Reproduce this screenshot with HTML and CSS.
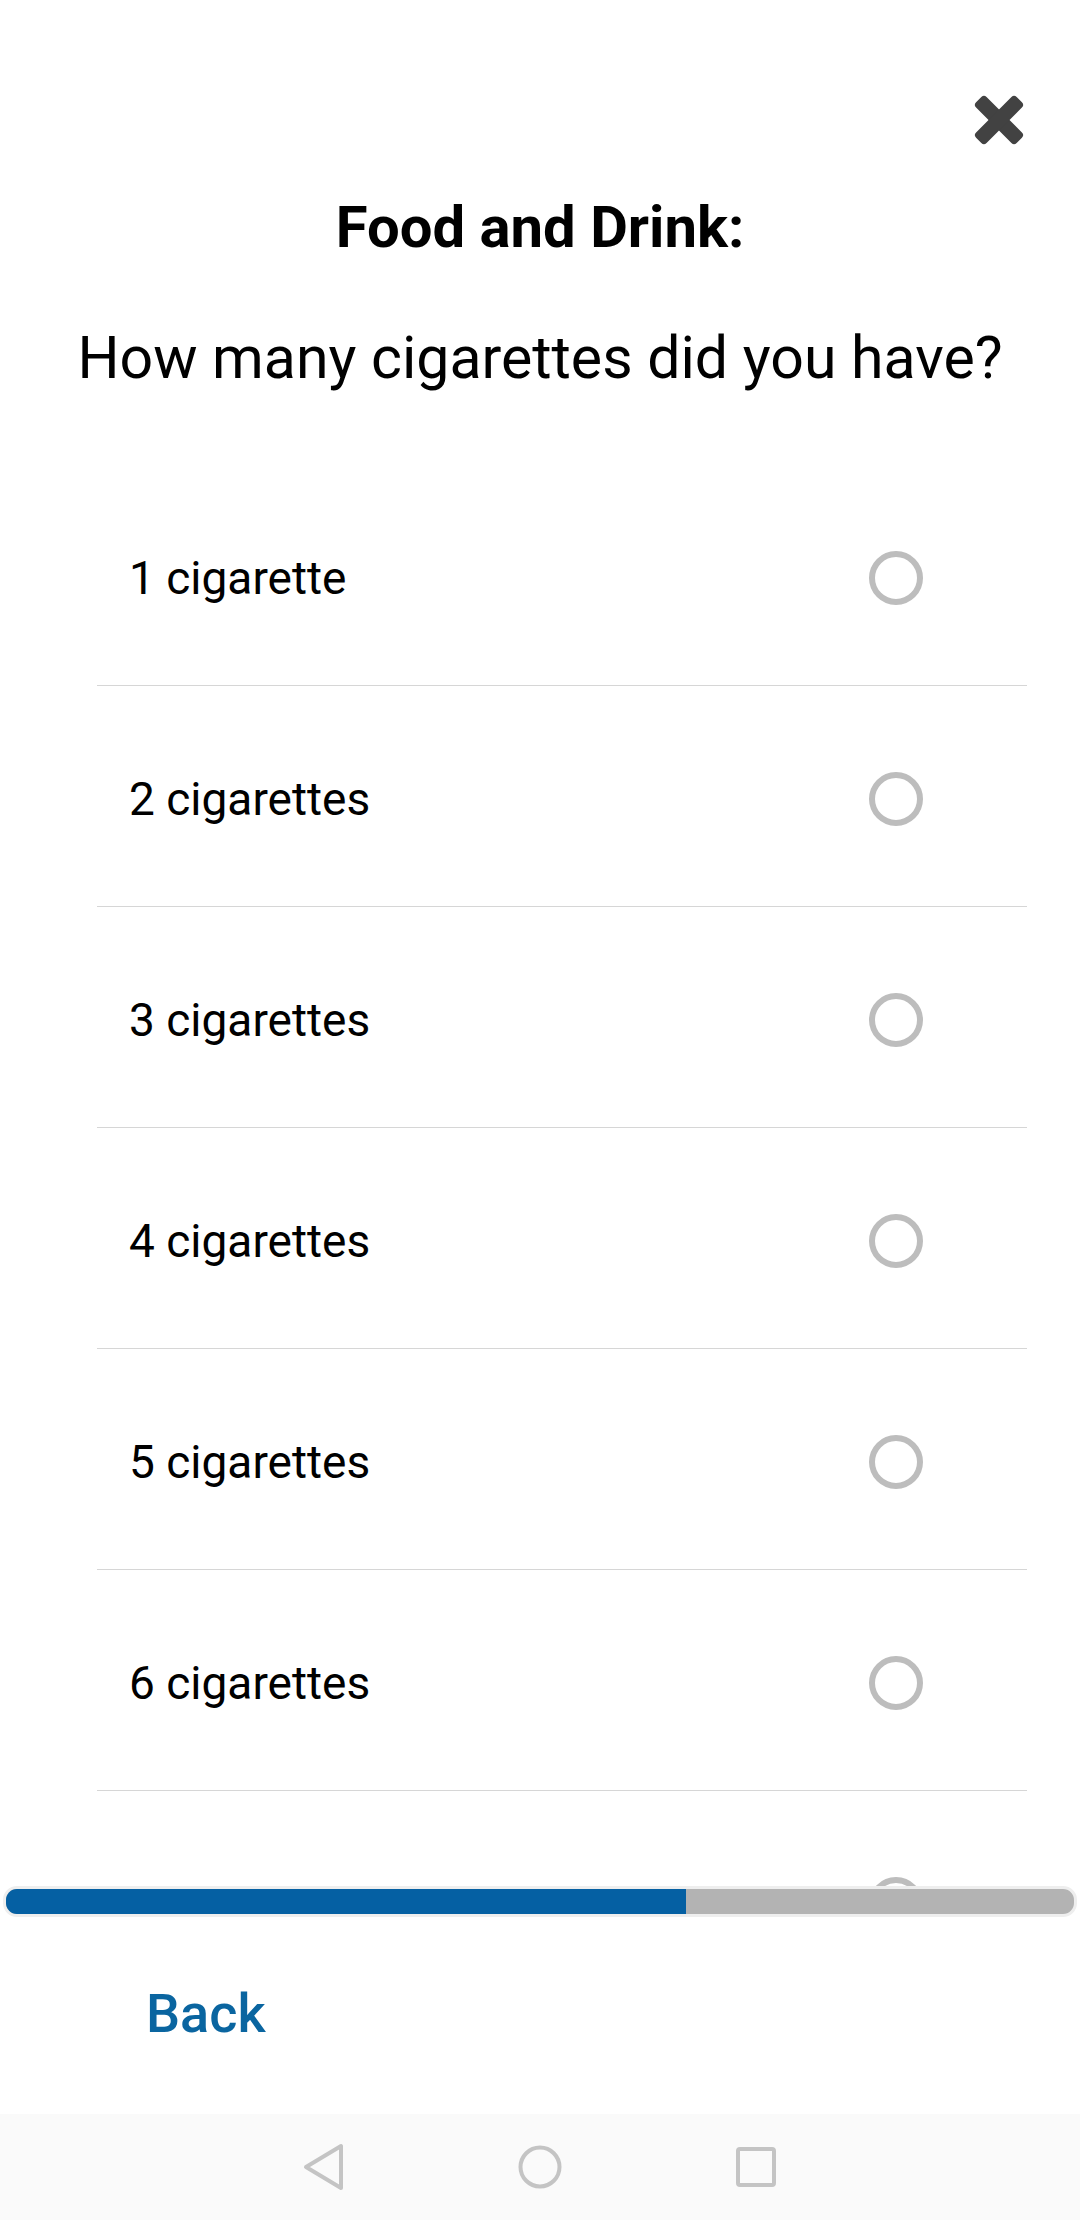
FILE: index.html
```html
<!DOCTYPE html>
<html>
<head>
<meta charset="utf-8">
<link rel="stylesheet" href="styles.css">
</head>
<body>
<div class="screen">
  <div class="scroll">
    <div class="header">
      <button class="close" aria-label="Close">
        <svg width="50" height="50" viewBox="0 0 54 54">
          <rect x="-4" y="19" width="62" height="16" rx="4" fill="#424242" transform="rotate(45 27 27)"/>
          <rect x="-4" y="19" width="62" height="16" rx="4" fill="#424242" transform="rotate(-45 27 27)"/>
        </svg>
      </button>
    </div>
    <h1 class="title">Food and Drink:</h1>
    <h2 class="question">How many cigarettes did you have?</h2>
    <ul class="options">
      <li class="option"><span class="label">1 cigarette</span><span class="radio"></span></li>
      <li class="option"><span class="label">2 cigarettes</span><span class="radio"></span></li>
      <li class="option"><span class="label">3 cigarettes</span><span class="radio"></span></li>
      <li class="option"><span class="label">4 cigarettes</span><span class="radio"></span></li>
      <li class="option"><span class="label">5 cigarettes</span><span class="radio"></span></li>
      <li class="option"><span class="label">6 cigarettes</span><span class="radio"></span></li>
      <li class="option"><span class="label">7 cigarettes</span><span class="radio"></span></li>
    </ul>
  </div>
  <div class="progress"><div class="progress-fill" style="width: 63.7%"></div></div>
  <div class="footer">
    <a class="back">Back</a>
  </div>
  <div class="navbar">
    <svg width="44" height="48" viewBox="0 0 44 48"><path d="M39 3 L39 45 L4 24 Z" fill="none" stroke="#c4c4c4" stroke-width="4" stroke-linejoin="round"/></svg>
    <svg width="48" height="48" viewBox="0 0 48 48"><circle cx="24" cy="24" r="19.5" fill="none" stroke="#c4c4c4" stroke-width="4"/></svg>
    <svg width="44" height="44" viewBox="0 0 44 44"><rect x="4" y="4" width="36" height="36" rx="2" fill="none" stroke="#c4c4c4" stroke-width="4"/></svg>
  </div>
</div>
</body>
</html>
```

FILE: styles.css
```css
* { box-sizing: border-box; }
html, body { margin: 0; padding: 0; background: #ffffff; }
body { font-family: Roboto, "Noto Sans", "Liberation Sans", sans-serif; color: #000; }

.screen {
  width: 1080px;
  height: 2220px;
  display: flex;
  flex-direction: column;
  overflow: hidden;
}

.scroll {
  height: 1886px;
  overflow: hidden;
  flex: none;
}

.header {
  height: 193px;
  display: flex;
  justify-content: flex-end;
  align-items: flex-start;
  padding: 95px 56px 0 0;
}

.close {
  border: 0;
  background: none;
  padding: 0;
  width: 50px;
  height: 50px;
  display: block;
}
.close svg { display: block; }

.title {
  margin: 0;
  font-size: 58px;
  line-height: 68px;
  font-weight: 700;
  text-align: center;
}

.question {
  margin: 62px 0 0;
  font-size: 59px;
  line-height: 69px;
  font-weight: 400;
  text-align: center;
}

.options {
  list-style: none;
  margin: 73px 53px 0 97px;
  padding: 0;
}

.option {
  height: 221px;
  border-bottom: 1px solid #d6d6d6;
  display: flex;
  align-items: center;
  justify-content: space-between;
  padding: 5px 104px 0 32px;
}

.label {
  font-size: 46px;
  line-height: 54px;
  color: #000;
}

.radio {
  width: 54px;
  height: 54px;
  border: 6px solid #bdbdbd;
  border-radius: 50%;
  flex: none;
}

.progress {
  flex: none;
  height: 31px;
  margin: 0 3px;
  border: 3px solid #eeeeee;
  border-radius: 14px;
  background: #b3b3b3;
  overflow: hidden;
  display: flex;
}
.progress-fill {
  height: 100%;
  background: #0560a3;
}

.footer {
  flex: 1;
  padding: 65px 0 0 146px;
}

.back {
  font-size: 54px;
  line-height: 63px;
  font-weight: 500;
  color: #0a65a0;
  text-decoration: none;
}

.navbar {
  flex: none;
  height: 106px;
  background: #fafafa;
  display: flex;
  align-items: center;
  justify-content: center;
  gap: 170px;
}
.navbar svg { display: block; }
```
